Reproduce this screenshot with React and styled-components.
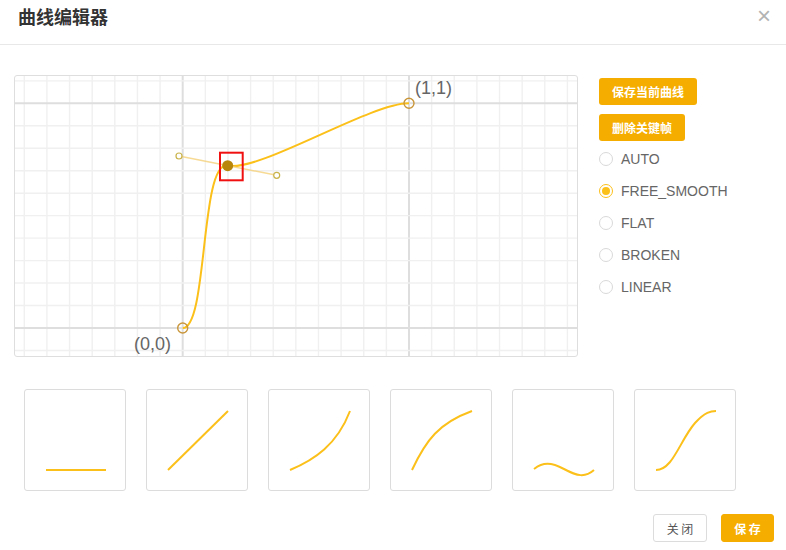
import React, { useState } from 'react';
import styled, { createGlobalStyle } from 'styled-components';

const MODES = ['AUTO', 'FREE_SMOOTH', 'FLAT', 'BROKEN', 'LINEAR'];

const PRESETS = [
  'M21 80 L81 80',
  'M21 80 L81 21',
  'M21 80 C45 70 68 55 81 21',
  'M21 80 C35 50 48 33 81 21',
  'M21 79 C30 72 38 72 51 79 C64 86 72 88 81 80',
  'M21 80 C38 80 45 50 60 33 C70 22 76 21 81 21',
];

const Grid = () => {
  const ox = 182.7, oy = 328, sx = 22.63, sy = 22.47;
  const lines = [];
  for (let k = -8; k <= 18; k++) {
    const x = ox + k * sx;
    const major = k === 0 || k === 10;
    lines.push(<line key={'v' + k} x1={x} y1={70} x2={x} y2={360} stroke={major ? '#dedede' : '#f0f0f0'} strokeWidth={major ? 2 : 1.4} />);
  }
  for (let k = -12; k <= 2; k++) {
    const y = oy + k * sy;
    const major = k === 0 || k === -10;
    lines.push(<line key={'h' + k} x1={10} y1={y} x2={580} y2={y} stroke={major ? '#dedede' : '#f0f0f0'} strokeWidth={major ? 2 : 1.4} />);
  }
  return <g>{lines}</g>;
};

const App = () => {
  const [mode, setMode] = useState('FREE_SMOOTH');
  return (
    <>
      <GlobalStyle />
      <Dialog>
        <Header>
          <Title>曲线编辑器</Title>
          <Close>×</Close>
        </Header>
        <Body>
          <Top>
            <CanvasBox>
              <svg width="562" height="280" viewBox="15 76 562 280">
                <Grid />
                <path d="M182.7 328 C208 328 200 160.2 227.7 165.7 C260 172 370 103 409 103.3" fill="none" stroke="#fcc01a" strokeWidth="2" />
                <line x1="179" y1="156" x2="276.7" y2="175.3" stroke="#f6d27a" strokeWidth="1.5" opacity="0.8" />
                <circle cx="179" cy="156" r="3" fill="#fff" stroke="#c9b34a" strokeWidth="1.2" />
                <circle cx="276.7" cy="175.3" r="3" fill="#fff" stroke="#c9b34a" strokeWidth="1.2" />
                <circle cx="182.7" cy="328" r="5" fill="none" stroke="#c9963a" strokeWidth="1.4" />
                <circle cx="409" cy="103.3" r="5" fill="none" stroke="#c9963a" strokeWidth="1.4" />
                <circle cx="227.7" cy="165.7" r="5.5" fill="#b8860b" />
                <rect x="220" y="152.7" width="22.7" height="27.6" fill="none" stroke="#f01010" strokeWidth="2" />
                <text x="415" y="94" fontSize="18" fill="#666" fontFamily="Liberation Sans, Arial, sans-serif">(1,1)</text>
                <text x="134" y="350" fontSize="18" fill="#666" fontFamily="Liberation Sans, Arial, sans-serif">(0,0)</text>
              </svg>
            </CanvasBox>
            <Side>
              <PrimaryButton>保存当前曲线</PrimaryButton>
              <PrimaryButton>删除关键帧</PrimaryButton>
              <RadioList>
                {MODES.map((m) => (
                  <RadioRow key={m} onClick={() => setMode(m)}>
                    <RadioDot $checked={mode === m} />
                    <RadioLabel>{m}</RadioLabel>
                  </RadioRow>
                ))}
              </RadioList>
            </Side>
          </Top>
          <Presets>
            {PRESETS.map((d, i) => (
              <PresetCard key={i}>
                <svg width="100" height="100" viewBox="0 0 100 100">
                  <path d={d} fill="none" stroke="#fcc01a" strokeWidth="2" />
                </svg>
              </PresetCard>
            ))}
          </Presets>
        </Body>
        <Footer>
          <GhostButton>关 闭</GhostButton>
          <FooterSave>保 存</FooterSave>
        </Footer>
      </Dialog>
    </>
  );
};

export default App;

// styled components

const GlobalStyle = createGlobalStyle`
  body {
    margin: 0;
    background: #fff;
    font-family: "Liberation Sans", Arial, "Noto Sans CJK SC", sans-serif;
  }
`;

const Dialog = styled.div`
  width: 786px;
  height: 550px;
  background: #fff;
`;

const Header = styled.div`
  display: flex;
  align-items: center;
  justify-content: space-between;
  box-sizing: border-box;
  height: 45px;
  padding: 0 15px 12px 18px;
  border-bottom: 1px solid #e8e8e8;
`;

const Title = styled.div`
  font-size: 18px;
  font-weight: bold;
  color: #333;
  font-family: "Noto Sans CJK SC", sans-serif;
`;

const Close = styled.div`
  font-size: 24px;
  color: #b3b3b3;
  line-height: 1;
`;

const Body = styled.div`
  padding: 30px 0 0 14px;
`;

const Top = styled.div`
  display: flex;
  gap: 21px;
`;

const CanvasBox = styled.div`
  width: 562px;
  height: 280px;
  border: 1px solid #dedede;
  border-radius: 3px;
  overflow: hidden;
  svg { display: block; }
`;

const Side = styled.div`
  display: flex;
  flex-direction: column;
  align-items: flex-start;
  gap: 9px;
  padding-top: 3px;
`;

const PrimaryButton = styled.button`
  height: 27px;
  padding: 0 13px;
  border: none;
  border-radius: 3px;
  background: #f5ad00;
  color: #fff;
  font-size: 12px;
  font-weight: bold;
  font-family: "Noto Sans CJK SC", sans-serif;
`;

const RadioList = styled.div`
  display: flex;
  flex-direction: column;
  gap: 14px;
`;

const RadioRow = styled.label`
  display: flex;
  align-items: center;
  gap: 8px;
  height: 18px;
  cursor: pointer;
`;

const RadioDot = styled.span`
  width: 12px;
  height: 12px;
  border-radius: 50%;
  border: 1px solid ${(p) => (p.$checked ? '#fcc01a' : '#d9d9d9')};
  position: relative;
  &::after {
    content: '';
    display: ${(p) => (p.$checked ? 'block' : 'none')};
    position: absolute;
    left: 2px;
    top: 2px;
    width: 8px;
    height: 8px;
    border-radius: 50%;
    background: #fcc01a;
  }
`;

const RadioLabel = styled.span`
  font-size: 14px;
  color: #666;
`;

const Presets = styled.div`
  display: flex;
  gap: 20px;
  padding: 32px 0 0 10px;
`;

const PresetCard = styled.div`
  width: 100px;
  height: 100px;
  border: 1px solid #dcdcdc;
  border-radius: 3px;
  svg { display: block; }
`;

const Footer = styled.div`
  display: flex;
  justify-content: flex-end;
  gap: 14px;
  padding: 23px 12px 0 0;
`;

const GhostButton = styled.button`
  width: 54px;
  height: 28px;
  border: 1px solid #dcdcdc;
  border-radius: 3px;
  background: #fff;
  color: #555;
  font-size: 12px;
  font-family: "Noto Sans CJK SC", sans-serif;
`;

const FooterSave = styled(GhostButton)`
  width: 53px;
  border-color: #f5ad00;
  background: #f5ad00;
  color: #fff;
  font-weight: bold;
`;
